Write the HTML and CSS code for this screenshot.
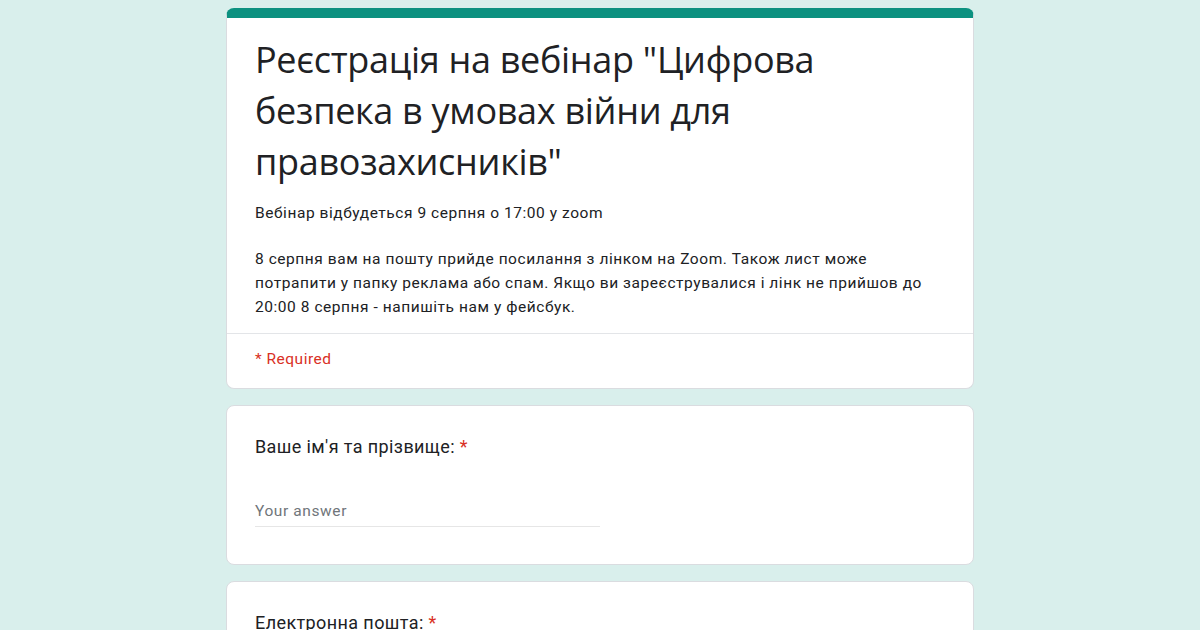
FILE: index.html
```html
<!DOCTYPE html>
<html lang="uk">
<head>
    <meta charset="UTF-8">
    <meta name="viewport" content="width=device-width, initial-scale=1.0">
    <title>Реєстрація на вебінар</title>
    <link rel="stylesheet" href="styles.css">
</head>
<body>
    <div class="form-wrap">
        <div class="card header-card">
            <div class="header-body">
                <h1 class="form-title">Реєстрація на вебінар "Цифрова безпека в умовах війни для правозахисників"</h1>
                <div class="form-desc">
                    <p>Вебінар відбудеться 9 серпня о 17:00 у zoom</p>
                    <p>8 серпня вам на пошту прийде посилання з лінком на Zoom. Також лист може потрапити у папку реклама або спам. Якщо ви зареєструвалися і лінк не прийшов до 20:00 8 серпня - напишіть нам у фейсбук.</p>
                </div>
            </div>
            <div class="required-note">* Required</div>
        </div>

        <div class="card question">
            <div class="question-title">Ваше ім'я та прізвище: <span class="star">*</span></div>
            <div class="answer">Your answer</div>
        </div>

        <div class="card question">
            <div class="question-title">Електронна пошта: <span class="star">*</span></div>
            <div class="answer">Your answer</div>
        </div>
    </div>
</body>
</html>
```

FILE: styles.css
```css
body {
    margin: 0;
    padding: 0;
    background: #d9efec;
    font-family: 'Roboto', 'Liberation Sans', sans-serif;
    color: #202124;
}

.form-wrap {
    width: 748px;
    margin: 8px auto 0;
    display: flex;
    flex-direction: column;
    gap: 16px;
}

.card {
    background: #ffffff;
    border: 1px solid #dadce0;
    border-radius: 8px;
}

.header-card {
    border-top: 10px solid #0c9180;
    border-color: #0c9180 #dadce0 #dadce0;
}

.header-body {
    padding: 16px 28px 14px;
    border-bottom: 1px solid #e3e5e8;
}

.form-title {
    margin: 0;
    font-family: 'Open Sans', 'Roboto', sans-serif;
    font-size: 36px;
    font-weight: 400;
    line-height: 51px;
    letter-spacing: -0.3px;
}

.form-desc {
    margin-top: 14px;
    font-size: 15.5px;
    line-height: 24px;
    letter-spacing: 0.55px;
}

.form-desc p {
    margin: 0 0 22px;
}

.form-desc p:last-child {
    margin-bottom: 0;
}

.required-note {
    padding: 16px 28px 20px;
    font-size: 15.5px;
    letter-spacing: 0.5px;
    color: #d93025;
}

.question {
    padding: 29px 28px 37px;
}

.question-title {
    font-size: 18px;
    line-height: 24px;
    letter-spacing: 0.4px;
}

.star {
    color: #d93025;
}

.answer {
    width: 345px;
    margin-top: 43px;
    padding-bottom: 6px;
    border-bottom: 1px solid #e6e6e6;
    font-size: 15.5px;
    letter-spacing: 0.6px;
    color: #70757a;
}
```
